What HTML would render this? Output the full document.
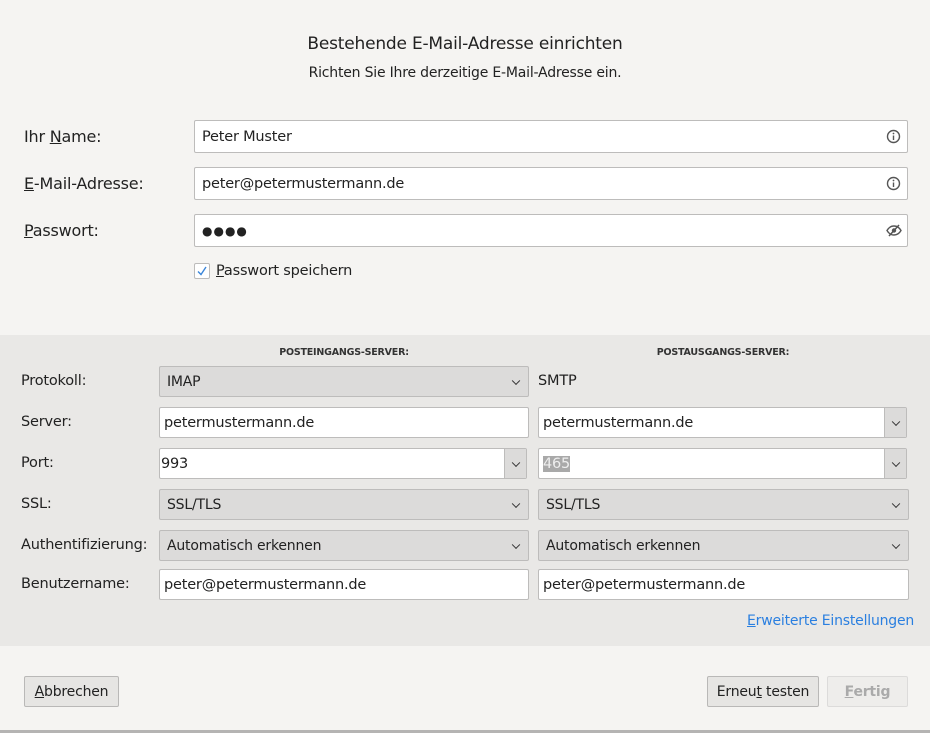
<!DOCTYPE html>
<html><head><meta charset="utf-8"><style>
*{box-sizing:border-box;margin:0;padding:0}
body{width:930px;height:733px;background:#f5f4f2;font-family:"DejaVu Sans","Liberation Sans",sans-serif;font-size:14px;color:#222;position:relative;overflow:hidden;letter-spacing:-0.2px}
.a{position:absolute}
.in{position:absolute;background:#fff;border:1px solid #bdbcbb;border-radius:2px;padding-left:7px;display:flex;align-items:center;font-size:14.5px}
.sel{position:absolute;background:#dcdbda;border:1px solid #bdbcbb;border-radius:2px;padding-left:7px;display:flex;align-items:center}
.sel::after{content:"";position:absolute;right:9px;top:50%;width:5px;height:5px;border-right:1.6px solid #333;border-bottom:1.6px solid #333;transform:translateY(-70%) rotate(45deg)}
.dd{position:absolute;right:0;top:0;bottom:0;width:22px;background:#dcdbda;border-left:1px solid #bdbcbb}
.dd::after{content:"";position:absolute;left:8px;top:50%;width:5px;height:5px;border-right:1.6px solid #333;border-bottom:1.6px solid #333;transform:translateY(-70%) rotate(45deg)}
.lbl{position:absolute;font-size:14.5px}
.btn{position:absolute;background:#e6e5e3;border:1px solid #b9b8b7;border-radius:2px;display:flex;align-items:center;justify-content:center;font-size:14px}
u{text-decoration:underline}
</style></head><body>
<div class="a" style="top:34px;width:930px;text-align:center;font-size:17px;color:#222">Bestehende E-Mail-Adresse einrichten</div>
<div class="a" style="top:65px;width:930px;text-align:center;font-size:14px;color:#222">Richten Sie Ihre derzeitige E-Mail-Adresse ein.</div>

<div class="lbl" style="left:24px;top:127px;font-size:16px">Ihr <u>N</u>ame:</div>
<div class="lbl" style="left:24px;top:174px;font-size:16px"><u>E</u>-Mail-Adresse:</div>
<div class="lbl" style="left:24px;top:221px;font-size:16px"><u>P</u>asswort:</div>
<div class="in" style="left:194px;top:120px;width:714px;height:33px">Peter Muster</div>
<div class="in" style="left:194px;top:167px;width:714px;height:33px">peter@petermustermann.de</div>
<div class="in" style="left:194px;top:214px;width:714px;height:33px;font-size:12px;letter-spacing:1px">●●●●</div>
<svg class="a" style="left:886px;top:129px" width="15" height="15" viewBox="0 0 15 15"><circle cx="7.5" cy="7.5" r="6" fill="none" stroke="#555" stroke-width="1.4"/><rect x="6.8" y="6.5" width="1.4" height="4.5" fill="#555"/><circle cx="7.5" cy="4.5" r=".9" fill="#555"/></svg>
<svg class="a" style="left:886px;top:176px" width="15" height="15" viewBox="0 0 15 15"><circle cx="7.5" cy="7.5" r="6" fill="none" stroke="#555" stroke-width="1.4"/><rect x="6.8" y="6.5" width="1.4" height="4.5" fill="#555"/><circle cx="7.5" cy="4.5" r=".9" fill="#555"/></svg>
<svg class="a" style="left:886px;top:223px" width="16" height="15" viewBox="0 0 16 15"><path d="M1 7.5C3 4 5.5 3 8 3s5 1 7 4.5C13 11 10.5 12 8 12S3 11 1 7.5Z" fill="none" stroke="#555" stroke-width="1.4"/><circle cx="8" cy="7.5" r="2.2" fill="#555"/><path d="M3 13L13 2" stroke="#555" stroke-width="1.5"/></svg>
<div class="a" style="left:194px;top:263px;width:16px;height:16px;background:#fff;border:1px solid #bdbcbb;border-radius:2px"></div>
<svg class="a" style="left:196px;top:265px" width="12" height="12" viewBox="0 0 12 12"><path d="M2 6.5L5 9.5L10 2" fill="none" stroke="#3b86d9" stroke-width="1.4"/></svg>
<div class="lbl" style="left:216px;top:263px;font-size:14.5px"><u>P</u>asswort speichern</div>

<div class="a" style="left:0;top:335px;width:930px;height:311px;background:#e9e8e6"></div>
<div class="a" style="left:159px;top:347px;width:370px;text-align:center;font-size:9.5px;font-weight:bold;color:#333">POSTEINGANGS-SERVER:</div>
<div class="a" style="left:538px;top:347px;width:370px;text-align:center;font-size:9.5px;font-weight:bold;color:#333">POSTAUSGANGS-SERVER:</div>

<div class="lbl" style="left:21px;top:373px">Protokoll:</div>
<div class="lbl" style="left:21px;top:414px">Server:</div>
<div class="lbl" style="left:21px;top:455px">Port:</div>
<div class="lbl" style="left:21px;top:496px">SSL:</div>
<div class="lbl" style="left:21px;top:537px">Authentifizierung:</div>
<div class="lbl" style="left:21px;top:576px">Benutzername:</div>

<div class="sel" style="left:159px;top:366px;width:370px;height:31px">IMAP</div>
<div class="lbl" style="left:538px;top:373px">SMTP</div>
<div class="in" style="left:159px;top:407px;width:370px;height:31px;padding-left:4px">petermustermann.de</div>
<div class="in" style="left:538px;top:407px;width:369px;height:31px;padding-left:4px">petermustermann.de<div class="dd"></div></div>
<div class="in" style="left:159px;top:448px;width:368px;height:31px;padding-left:1px">993<div class="dd"></div></div>
<div class="in" style="left:538px;top:448px;width:369px;height:31px;padding-left:4px"><span style="background:#a9a9a9;color:#eee">465</span><div class="dd"></div></div>
<div class="sel" style="left:159px;top:489px;width:370px;height:31px">SSL/TLS</div>
<div class="sel" style="left:538px;top:489px;width:371px;height:31px">SSL/TLS</div>
<div class="sel" style="left:159px;top:530px;width:370px;height:31px">Automatisch erkennen</div>
<div class="sel" style="left:538px;top:530px;width:371px;height:31px">Automatisch erkennen</div>
<div class="in" style="left:159px;top:569px;width:370px;height:31px;padding-left:4px">peter@petermustermann.de</div>
<div class="in" style="left:538px;top:569px;width:371px;height:31px;padding-left:4px">peter@petermustermann.de</div>
<div class="lbl" style="left:747px;top:613px;color:#2a7fe0;font-size:14px"><u>E</u>rweiterte Einstellungen</div>

<div class="btn" style="left:24px;top:676px;width:95px;height:31px"><span><u>A</u>bbrechen</span></div>
<div class="btn" style="left:707px;top:676px;width:112px;height:31px"><span>Erneu<u>t</u> testen</span></div>
<div class="btn" style="left:827px;top:676px;width:81px;height:31px;background:#eeedeb;border-color:#dcdbda;color:#aaa;font-weight:bold"><span><u>F</u>ertig</span></div>
<div class="a" style="left:0;top:730px;width:930px;height:3px;background:#b5b4b3"></div>
</body></html>
